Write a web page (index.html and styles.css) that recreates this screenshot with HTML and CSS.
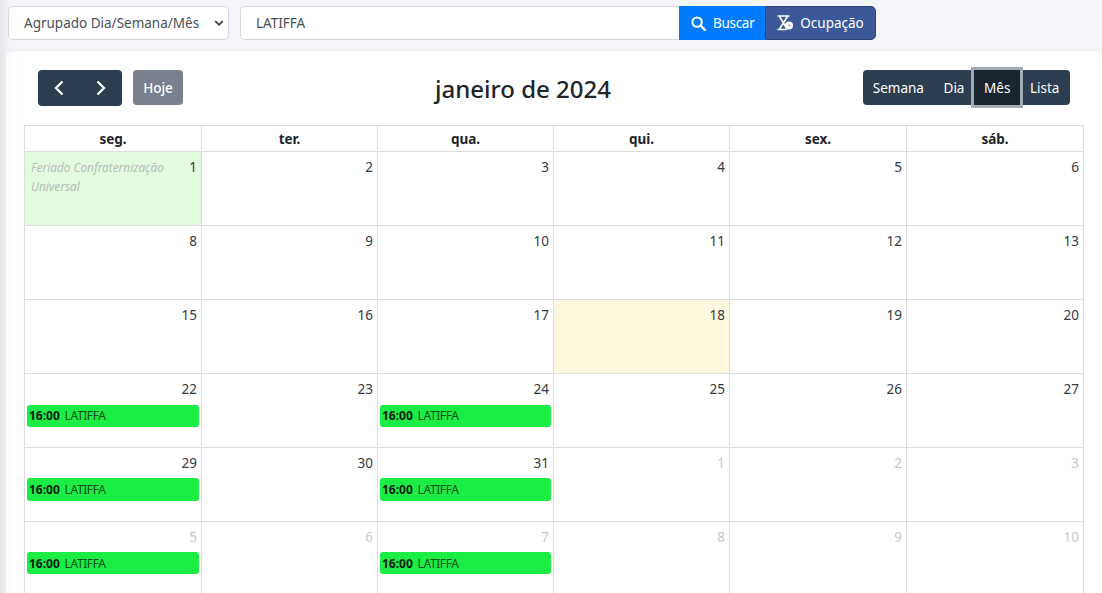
FILE: index.html
```html
<!DOCTYPE html>
<html lang="pt-BR">
<head>
    <meta charset="UTF-8">
    <meta name="viewport" content="width=device-width, initial-scale=1.0">
    <title>Agenda</title>
    <link rel="stylesheet" href="styles.css">
</head>
<body>
    <div class="search-bar">
        <div class="select-box">
            <span>Agrupado Dia/Semana/Mês</span>
            <svg class="select-arrow" viewBox="0 0 16 16" width="10" height="10"><path d="M2 5l6 6 6-6" fill="none" stroke="#343a40" stroke-width="2.800"/></svg>
        </div>
        <div class="search-group">
            <div class="search-input">LATIFFA</div>
            <button class="btn-buscar">
                <svg viewBox="0 0 16 16" width="15" height="15"><circle cx="6.500" cy="6.500" r="5" fill="none" stroke="#fff" stroke-width="2.200"/><path d="M10.500 10.500l4.300 4.300" stroke="#fff" stroke-width="2.600" stroke-linecap="round"/></svg>
                Buscar
            </button>
            <button class="btn-ocupacao">
                <svg viewBox="0 0 16 16" width="16" height="16"><path d="M1 1h11M1 14.500h8M2.500 1.500L10 14M10.500 1.500L2.500 14" fill="none" stroke="#fff" stroke-width="1.500" stroke-linecap="round"/><circle cx="12" cy="10.500" r="4" fill="#fff"/><path d="M12 9.500v1.200h1.200" fill="none" stroke="#3b5998" stroke-width="0.800"/></svg>
                Ocupação
            </button>
        </div>
    </div>

    <div class="card">
        <div class="toolbar">
            <div class="toolbar-left">
                <div class="nav-group">
                    <button class="nav-btn"><svg viewBox="0 0 12 16" width="12" height="16"><path d="M9.500 1.500L3 8l6.500 6.500" fill="none" stroke="#fff" stroke-width="2.200"/></svg></button>
                    <button class="nav-btn"><svg viewBox="0 0 12 16" width="12" height="16"><path d="M2.500 1.500L9 8l-6.500 6.500" fill="none" stroke="#fff" stroke-width="2.200"/></svg></button>
                </div>
                <button class="today-btn">Hoje</button>
            </div>
            <h2 class="month-title">janeiro de 2024</h2>
            <div class="view-group">
                <button class="view-btn">Semana</button>
                <button class="view-btn">Dia</button>
                <button class="view-btn active">Mês</button>
                <button class="view-btn">Lista</button>
            </div>
        </div>

        <table class="calendar">
            <thead>
                <tr>
                    <th>seg.</th><th>ter.</th><th>qua.</th><th>qui.</th><th>sex.</th><th>sáb.</th>
                </tr>
            </thead>
            <tbody>
                <tr>
                    <td class="holiday"><div class="day-num">1</div><div class="holiday-text">Feriado Confraternização Universal</div></td>
                    <td><div class="day-num">2</div></td>
                    <td><div class="day-num">3</div></td>
                    <td><div class="day-num">4</div></td>
                    <td><div class="day-num">5</div></td>
                    <td><div class="day-num">6</div></td>
                </tr>
                <tr>
                    <td><div class="day-num">8</div></td>
                    <td><div class="day-num">9</div></td>
                    <td><div class="day-num">10</div></td>
                    <td><div class="day-num">11</div></td>
                    <td><div class="day-num">12</div></td>
                    <td><div class="day-num">13</div></td>
                </tr>
                <tr>
                    <td><div class="day-num">15</div></td>
                    <td><div class="day-num">16</div></td>
                    <td><div class="day-num">17</div></td>
                    <td class="today"><div class="day-num">18</div></td>
                    <td><div class="day-num">19</div></td>
                    <td><div class="day-num">20</div></td>
                </tr>
                <tr>
                    <td><div class="day-num">22</div><div class="event"><b>16:00</b> LATIFFA</div></td>
                    <td><div class="day-num">23</div></td>
                    <td><div class="day-num">24</div><div class="event"><b>16:00</b> LATIFFA</div></td>
                    <td><div class="day-num">25</div></td>
                    <td><div class="day-num">26</div></td>
                    <td><div class="day-num">27</div></td>
                </tr>
                <tr class="row-five">
                    <td><div class="day-num">29</div><div class="event"><b>16:00</b> LATIFFA</div></td>
                    <td><div class="day-num">30</div></td>
                    <td><div class="day-num">31</div><div class="event"><b>16:00</b> LATIFFA</div></td>
                    <td class="other"><div class="day-num">1</div></td>
                    <td class="other"><div class="day-num">2</div></td>
                    <td class="other"><div class="day-num">3</div></td>
                </tr>
                <tr class="row-six">
                    <td class="other"><div class="day-num">5</div><div class="event"><b>16:00</b> LATIFFA</div></td>
                    <td class="other"><div class="day-num">6</div></td>
                    <td class="other"><div class="day-num">7</div><div class="event"><b>16:00</b> LATIFFA</div></td>
                    <td class="other"><div class="day-num">8</div></td>
                    <td class="other"><div class="day-num">9</div></td>
                    <td class="other"><div class="day-num">10</div></td>
                </tr>
            </tbody>
        </table>
    </div>
</body>
</html>
```

FILE: styles.css
```css
html, body {
    height: 100%;
    overflow: hidden;
}
body {
    font-family: "Noto Sans", "Open Sans", sans-serif;
    font-size: 13.5px;
    margin: 0;
    padding: 6px 0 0 0;
    box-sizing: border-box;
    background: linear-gradient(to right, #e6e7ea, #f4f5f9 10px);
    color: #212529;
}
button {
    font-family: inherit;
    font-size: 13.5px;
    color: #fff;
    border: none;
    cursor: pointer;
    padding: 0;
}
.search-bar {
    display: flex;
    gap: 11px;
    padding-left: 8px;
    height: 34px;
}
.select-box {
    width: 221px;
    box-sizing: border-box;
    display: flex;
    align-items: center;
    justify-content: space-between;
    padding: 0 4px 0 15px;
    background: #fff;
    border: 1px solid #d5d8de;
    border-radius: 5px;
    color: #495057;
}
.search-group {
    display: flex;
}
.search-input {
    width: 439px;
    box-sizing: border-box;
    display: flex;
    align-items: center;
    padding-left: 15px;
    background: #fff;
    border: 1px solid #d5d8de;
    border-right: none;
    border-radius: 5px 0 0 5px;
    color: #495057;
}
.btn-buscar, .btn-ocupacao {
    display: flex;
    align-items: center;
    gap: 7px;
}
.btn-buscar {
    width: 86px;
    padding-left: 12px;
    letter-spacing: -0.3px;
    background: #007bff;
}
.btn-ocupacao {
    width: 111px;
    justify-content: center;
    background: #3b5998;
    border: 1px solid #2d4373;
    border-radius: 0 5px 5px 0;
}
.card {
    margin: 11px 0 0 6px;
    padding: 19px 18px 0 18px;
    height: 700px;
    background: linear-gradient(to right, #fbfbfb, #fff 14px);
    border-radius: 6px 6px 0 0;
    box-shadow: 0 0 3px rgba(0, 0, 0, 0.04);
}
.toolbar {
    display: flex;
    justify-content: space-between;
    align-items: flex-start;
    height: 55px;
    padding: 0 14px;
}
.toolbar-left {
    display: flex;
    gap: 11px;
}
.nav-group {
    display: flex;
    height: 36px;
    background: #2c3e50;
    border-radius: 4px;
}
.nav-btn {
    width: 42px;
    background: none;
    display: flex;
    align-items: center;
    justify-content: center;
}
.today-btn {
    width: 50px;
    height: 35px;
    background: #78818d;
    border-radius: 4px;
    font-weight: 500;
}
.month-title {
    margin: 0;
    font-size: 24px;
    font-weight: 500;
    line-height: 38px;
    color: #212529;
}
.view-group {
    display: flex;
    height: 35px;
    width: 207px;
    background: #2c3e50;
    border-radius: 4px;
}
.view-btn {
    background: none;
    height: 35px;
    padding: 0 9.8px;
}
.view-btn.active {
    background: #1a252f;
    box-shadow: 0 0 0 3px #a3abb4;
}
.calendar {
    table-layout: fixed;
    border-collapse: collapse;
}
.calendar th, .calendar td {
    border: 1px solid #ddd;
    padding: 0;
}
.calendar th {
    height: 25px;
    font-size: 13.5px;
    font-weight: 700;
}
.calendar th:nth-child(n+2):nth-child(-n+4) {
    width: 175px;
}
.calendar th:nth-child(1), .calendar th:nth-child(n+5) {
    width: 176px;
}
.calendar td {
    height: 73px;
    vertical-align: top;
}
.day-num {
    text-align: right;
    padding: 4px 4px 0 0;
    height: 25px;
    box-sizing: border-box;
    font-size: 13.5px;
    line-height: 22px;
    color: #343a40;
}
.holiday {
    background: #e3fae0;
    position: relative;
}
.holiday-text {
    position: absolute;
    left: 6px;
    top: 6px;
    width: 150px;
    font-size: 11.8px;
    line-height: 19px;
    font-style: italic;
    color: #b8bdb6;
}
.today {
    background: #fff8de;
}
.other .day-num {
    color: #c8c8c8;
}
.event {
    margin: 6px 2px 0 2px;
    height: 22px;
    padding-left: 2px;
    background: #1bed45;
    border-radius: 3px;
    font-size: 12px;
    letter-spacing: -0.4px;
    line-height: 22px;
    color: #0b4f18;
}
.event b {
    letter-spacing: 0;
    color: #0a1a0d;
    margin-right: 2px;
}
.row-five .event {
    margin-top: 5px;
    height: 23px;
    line-height: 23px;
}
.row-six .event {
    margin-top: 5px;
    line-height: 24px;
}
```
